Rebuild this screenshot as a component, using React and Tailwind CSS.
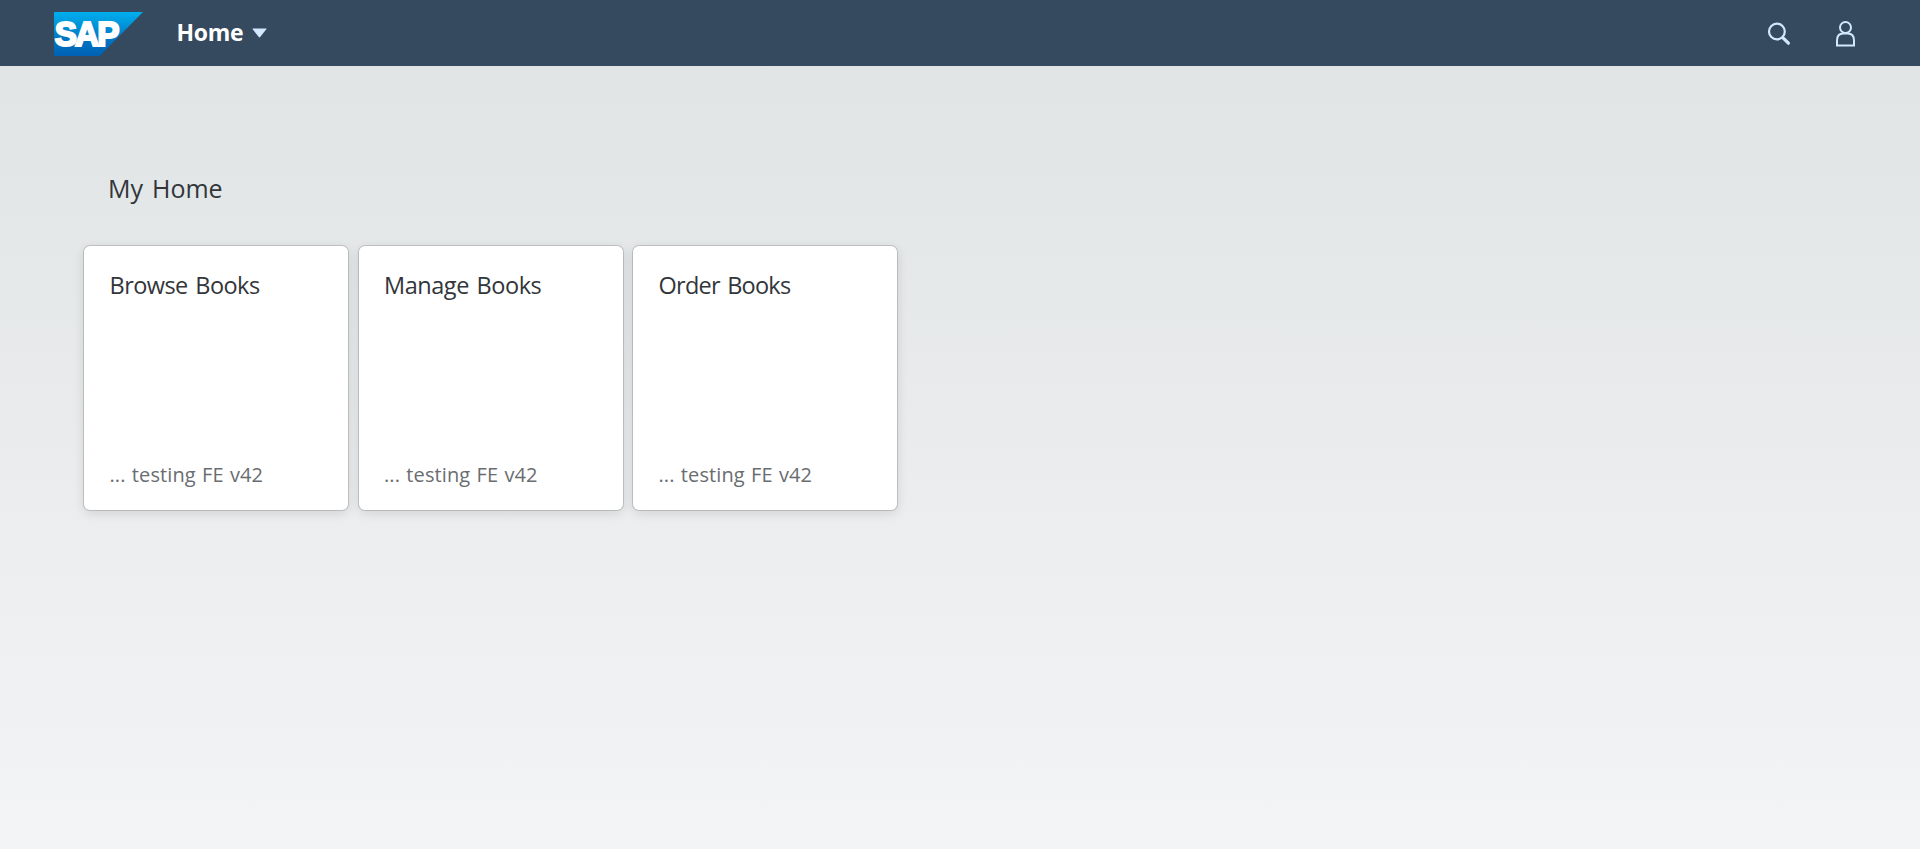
const tiles = [
  { title: 'Browse Books', info: '... testing FE v42', tracking: 'tracking-[-0.55px]' },
  { title: 'Manage Books', info: '... testing FE v42', tracking: 'tracking-[-0.45px]' },
  { title: 'Order Books', info: '... testing FE v42', tracking: 'tracking-[-0.75px]' },
];

function Logo() {
  return (
    <svg width="89" height="44" viewBox="0 0 89 44" className="block" aria-label="SAP">
      <defs>
        <linearGradient id="logoFill" x1="0" y1="0" x2="0" y2="1">
          <stop offset="0" stopColor="#00aeef" />
          <stop offset="0.25" stopColor="#0099dc" />
          <stop offset="0.6" stopColor="#0076c4" />
          <stop offset="1" stopColor="#0061b4" />
        </linearGradient>
      </defs>
      <path d="M0 0H89L45.500 44H0Z" fill="url(#logoFill)" />
      <g transform="translate(0.7 34.300) scale(0.965 1)">
        <text x="0" y="0" fill="#fff" stroke="#fff" strokeWidth="2.200" fontFamily="'Liberation Sans', Arial, sans-serif" fontWeight="700" fontSize="34.500" letterSpacing="-1.900">SAP</text>
      </g>
    </svg>
  );
}

function Tile({ title, info, tracking }) {
  return (
    <article className="flex h-[264px] w-[264px] flex-col justify-between rounded-[6px] bg-white px-[25.5px] pt-[23px] pb-[21px] shadow-[0_0_0_1px_rgba(0,0,0,0.15),0_3px_12px_0_rgba(0,0,0,0.12)]">
      <h3 className={`text-[23.5px] leading-[32px] text-[#32363a] [word-spacing:2px] ${tracking}`}>{title}</h3>
      <p className="text-[20px] leading-[28px] tracking-[0.1px] text-[#6a6d70] [word-spacing:1px]">{info}</p>
    </article>
  );
}

export default function App() {
  return (
    <div className="flex h-[849px] w-full flex-col overflow-hidden bg-[linear-gradient(to_bottom,#dfe3e4,#f3f4f5)] font-['Open_Sans','Noto_Sans',sans-serif]">
      <header className="flex h-[66px] shrink-0 items-center bg-[#354a5f] pr-[62.5px] pl-[54px]">
        <div className="pt-[2px]"><Logo /></div>
        <button className="ml-[33.5px] flex items-center gap-[8.5px]">
          <span className="pb-[2px] text-[23px] leading-[32px] font-bold tracking-[-0.3px] text-white">Home</span>
          <svg width="15" height="10" viewBox="0 0 15 10" className="block">
            <path d="M1 0.500H14Q15 0.500 14.300 1.300L8.200 9Q7.500 9.800 6.800 9L0.700 1.300Q0 0.500 1 0.500Z" fill="#d1e8ff" />
          </svg>
        </button>
        <div className="ml-auto flex items-center gap-[42.5px] pt-[1px]">
          <svg width="24" height="24" viewBox="0 0 24 24" fill="none" stroke="#d1e8ff" className="block">
            <circle cx="9.900" cy="9.500" r="7.900" strokeWidth="2.200" />
            <path d="M16 15.800L21.400 21.200" strokeWidth="3.200" strokeLinecap="round" />
          </svg>
          <svg width="24" height="26" viewBox="0 0 24 26" fill="none" stroke="#d1e8ff" strokeWidth="2" className="block">
            <circle cx="11.500" cy="6.500" r="5.500" />
            <path d="M3 24.500V19.500Q3 12.500 9.200 12.500H13.800Q20 12.500 20 19.500V24.500Z" />
          </svg>
        </div>
      </header>
      <main className="flex flex-col pt-[105px] pl-[84px]">
        <h2 className="pl-[24px] text-[25px] leading-[34px] text-[#32363a] [word-spacing:2.5px]">My Home</h2>
        <section className="mt-[41px] flex gap-[10.5px]">
          {tiles.map((t) => (
            <Tile key={t.title} {...t} />
          ))}
        </section>
      </main>
    </div>
  );
}
